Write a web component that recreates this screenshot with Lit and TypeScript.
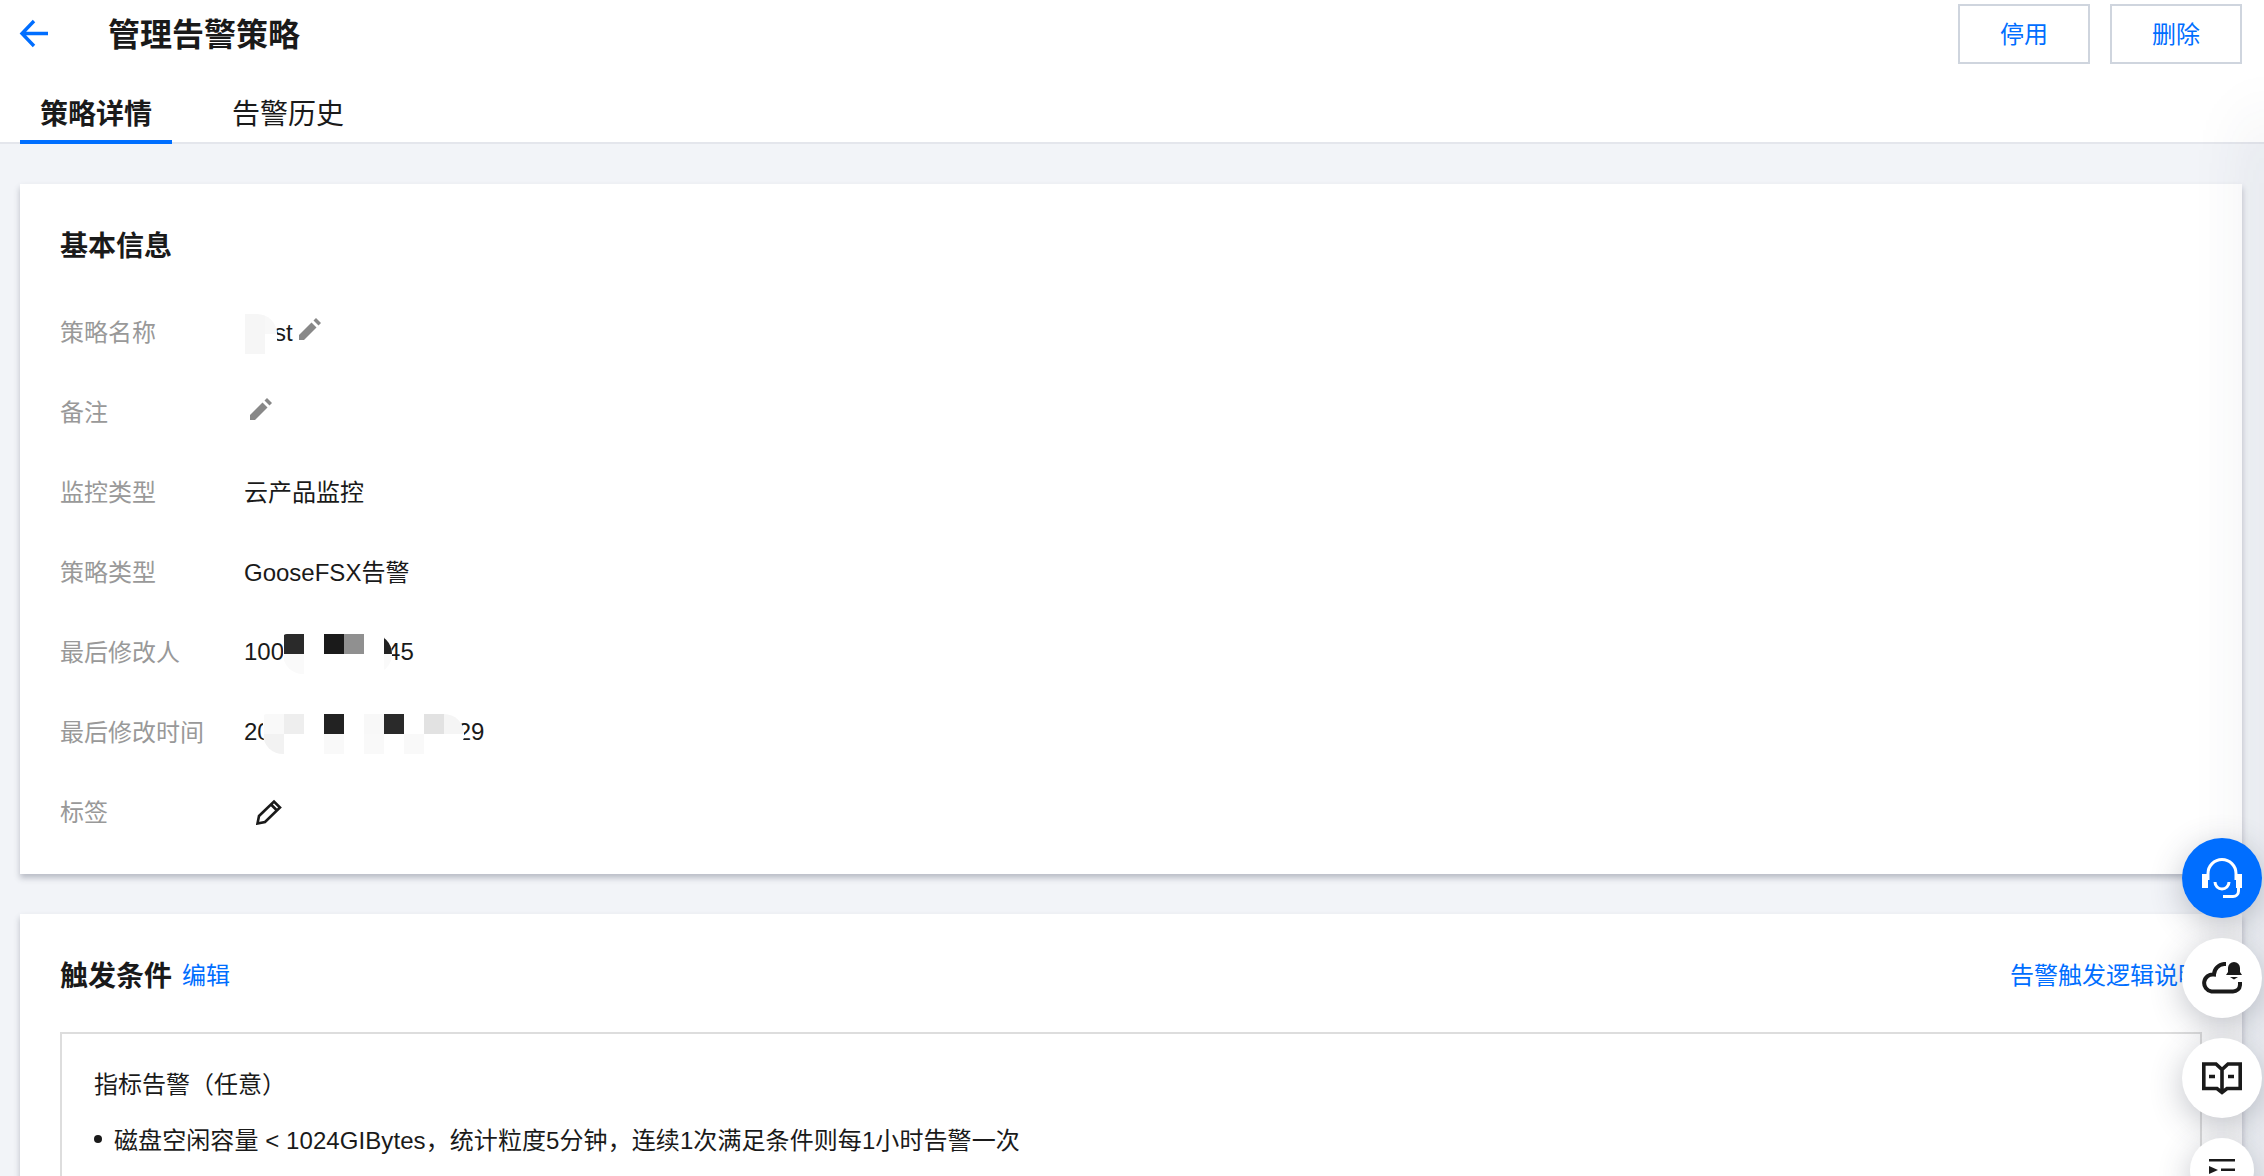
import { LitElement, html, css } from "lit";
import { customElement } from "lit/decorators.js";

const W = "#fff";
const pencil = html`<svg class="pen" viewBox="0 0 22 22"><path d="M0 22V17L12.5 4.500L17.500 9.500L5 22Z"/><path d="M14.500 2.500L17 0L22 5L19.500 7.500Z"/></svg>`;

@customElement("mosaic-mask")
class MosaicMask extends LitElement {
  static properties = { cells: { attribute: false }, w: { type: Number }, adv: { type: Number }, lead: { type: Number }, cols: { type: Number }, radius: { type: String } };
  cells: string[] = [];
  w = 0;
  adv = 0;
  lead = 0;
  cols = 1;
  radius = "4px 20px 20px 20px";
  static styles = css`
    :host { display: inline-block; position: relative; height: 0; flex: none; }
    .m { position: absolute; top: -16px; height: 40px; overflow: hidden; background: #fff; display: grid; grid-auto-rows: 20px; padding-left: 1px; box-sizing: border-box; }
  `;
  render() {
    return html`<div class="m" style="left:${this.lead}px;width:${this.w}px;border-radius:${this.radius};grid-template-columns:repeat(${this.cols},20px)">${this.cells.map((c) => html`<div style="background:${c}"></div>`)}</div>`;
  }
  updated() { this.style.width = this.adv + "px"; }
}

@customElement("app-root")
class AppRoot extends LitElement {
  static styles = css`
    :host { display: block; height: 1176px; overflow: hidden; position: relative; background: #f2f4f8; color: #1a1a1a; font-family: "Liberation Sans", "Noto Sans CJK SC", sans-serif; font-size: 24px; }
    header { background: #fff; border-bottom: 2px solid #e4e6ec; height: 142px; }
    .top { height: 72px; display: flex; align-items: flex-start; padding: 4px 22px 0 20px; box-sizing: border-box; }
    .back { width: 30px; height: 30px; margin: 15px 0 0 -1px; }
    .back path { fill: none; stroke: #006eff; stroke-width: 3.4; }
    h1 { margin: 1px 0 0 59px; font-size: 32px; line-height: 60px; font-weight: 700; flex: 1; }
    .btn { width: 132px; height: 60px; border: 2px solid #cfd5de; box-sizing: border-box; color: #006eff; display: flex; align-items: center; justify-content: center; margin-left: 20px; padding-bottom: 3px; }
    .tabs { display: flex; height: 72px; padding-left: 20px; }
    .tab { font-size: 28px; line-height: 32px; padding: 27px 20px 0; box-sizing: border-box; margin-right: 40px; height: 72px; }
    .tab.on { font-weight: 700; border-bottom: 4px solid #006eff; }
    main { padding: 40px 22px 0 20px; display: flex; flex-direction: column; gap: 40px; }
    .card { background: #fff; box-shadow: 0 4px 6px rgba(54, 58, 80, 0.3); padding: 40px 40px 22px; }
    .card h2 { margin: 0; padding-top: 3px; font-size: 28px; line-height: 40px; font-weight: 700; }
    .rows { margin-top: 25px; }
    .row { display: flex; height: 80px; align-items: center; padding-bottom: 4px; box-sizing: border-box; }
    .label { width: 184px; color: #999; }
    .value { display: flex; align-items: center; white-space: pre; }
    .value .t { display: inline-block; line-height: 32px; margin-top: 4px; }
    .value .t.first { margin-top: 6px; }
    .pen { width: 22px; height: 22px; fill: #888; margin: -2px 0 0 6px; }
    .tagpen { width: 26px; height: 26px; margin: 4px 0 0 12px; fill: none; stroke: #1a1a1a; stroke-width: 2.600; }
    .head { display: flex; align-items: center; }
    .head a, .link { color: #006eff; margin-bottom: 4px; }
    .head a { margin-left: 10px; }
    .link { margin-left: auto; }
    .box { border: 2px solid #ddd; margin-top: 35px; padding: 31px 30px 30px 32px; height: 400px; }
    .box p { margin: 0; line-height: 40px; }
    .box ul { margin: 16px 0 0; padding: 0; list-style: none; }
    .box li { line-height: 40px; display: flex; align-items: center; white-space: pre; letter-spacing: 0.08px; }
    .box li::before { content: ""; width: 8px; height: 8px; border-radius: 50%; background: #1a1a1a; margin: -4px 12px 0 0; }
    .edge { position: absolute; top: 120px; bottom: -200px; left: 2264px; width: 10px; box-shadow: 0 0 64px rgba(54, 58, 80, 0.32); }
    .float { position: absolute; right: 2px; top: 838px; display: flex; flex-direction: column; align-items: center; gap: 20px; width: 80px; }
    .fab { width: 80px; height: 80px; border-radius: 50%; background: #fff; display: flex; align-items: center; justify-content: center; box-shadow: 0 8px 32px rgba(54, 58, 80, 0.3); flex: none; }
    .fab.blue { background: #006eff; }
    .fab.small { width: 64px; height: 64px; }
    .fab svg { width: 40px; height: 40px; }
  `;
  render() {
    const m5 = ["#2a2a2a", W, "#1a1a1a", "#909090", W, "#222", "#fafafa", W, W, W, W, "#fafafa"];
    const m6 = ["#f9f9f9", "#eee", W, "#222", W, "#f8f8f8", "#2a2a2a", W, "#e2e2e2", "#f5f5f5", "#f2f2f2", W, W, "#f9f9f9", W, "#f9f9f9", W, "#f9f9f9", W, W];
    const m1 = ["#f6f6f6", "#f8f8f8", "#f6f6f6", W];
    return html`
      <header>
        <div class="top">
          <svg class="back" viewBox="0 0 30 30"><path d="M15 2L3 14.500L15 27M3 14.500H29"/></svg>
          <h1>管理告警策略</h1>
          <div class="btn">停用</div>
          <div class="btn">删除</div>
        </div>
        <div class="tabs"><div class="tab on">策略详情</div><div class="tab">告警历史</div></div>
      </header>
      <main>
        <section class="card">
          <h2>基本信息</h2>
          <div class="rows">
            <div class="row"><div class="label">策略名称</div><div class="value"><mosaic-mask .cells=${m1} .w=${33} .adv=${30} .cols=${2} .radius=${"0 20px 0 0"}></mosaic-mask><span class="t first">st</span>${pencil}</div></div>
            <div class="row"><div class="label">备注</div><div class="value">${pencil}</div></div>
            <div class="row"><div class="label">监控类型</div><div class="value">云产品监控</div></div>
            <div class="row"><div class="label">策略类型</div><div class="value">GooseFSX告警</div></div>
            <div class="row"><div class="label">最后修改人</div><div class="value"><span class="t">100</span><mosaic-mask .cells=${m5} .w=${109} .adv=${103} .lead=${-1} .cols=${6}></mosaic-mask><span class="t">45</span></div></div>
            <div class="row"><div class="label">最后修改时间</div><div class="value"><span class="t">20</span><mosaic-mask .cells=${m6} .w=${201} .adv=${187} .lead=${-8} .cols=${10}></mosaic-mask><span class="t">29</span></div></div>
            <div class="row"><div class="label">标签</div><div class="value"><svg class="tagpen" viewBox="0 0 26 26"><path d="M1.500 24.500L3 17L18 2.500L24 8.500L9 23ZM15 5.500L21 11.500"/></svg></div></div>
          </div>
        </section>
        <section class="card">
          <div class="head"><h2>触发条件</h2><a>编辑</a><span class="link">告警触发逻辑说明</span></div>
          <div class="box">
            <p>指标告警（任意）</p>
            <ul><li>磁盘空闲容量 &lt; 1024GIBytes，统计粒度5分钟，连续1次满足条件则每1小时告警一次</li></ul>
          </div>
        </section>
      </main>
      <div class="edge"></div>
      <div class="float">
        <div class="fab blue"><svg viewBox="0 0 40 40" fill="none" stroke="#fff" stroke-width="3"><path d="M6 22V15.500A14 14 0 0 1 34 15.500V22"/><path d="M13 24a7 7 0 0 0 14 0"/><path d="M36.500 30V33a5.500 5.500 0 0 1-5.500 5.500H21"/><rect x="0" y="16" width="6" height="14" fill="#fff" stroke="none"/><rect x="34" y="16" width="6" height="14" fill="#fff" stroke="none"/></svg></div>
        <div class="fab"><svg viewBox="0 0 40 40" fill="none" stroke="#1a1a1a" stroke-width="4"><g transform="translate(0 2)"><path d="M24 4H22A11 11 0 0 0 12 14.500A8.500 8.500 0 0 0 9.500 31.500H31A7 7 0 0 0 38 25V22"/><path d="M32 2a6 6 0 0 1 6 6v4l2 3H24l2-3V8a6 6 0 0 1 6-6Z" fill="#1a1a1a" stroke="none"/><path d="M28 17h8l-4 2.500Z" fill="#1a1a1a" stroke="none"/></g></svg></div>
        <div class="fab"><svg viewBox="0 0 40 40" fill="none" stroke="#1a1a1a" stroke-width="3.600"><g transform="translate(0 2.500)"><path d="M1.800 3.500H14L20 9L26 3.500H38.200V28H25L20 32L15 28H1.800ZM20 9V32"/><path d="M7 16H13M26 16H32"/></g></svg></div>
        <div class="fab small"><svg viewBox="0 0 40 40" fill="#1a1a1a" stroke="none"><path d="M7 9H33V11.500H7Z"/><path d="M7 16L16 20L7 24Z"/><path d="M19 18.500H33V21H19Z"/></svg></div>
      </div>
    `;
  }
}
void MosaicMask; void AppRoot;
